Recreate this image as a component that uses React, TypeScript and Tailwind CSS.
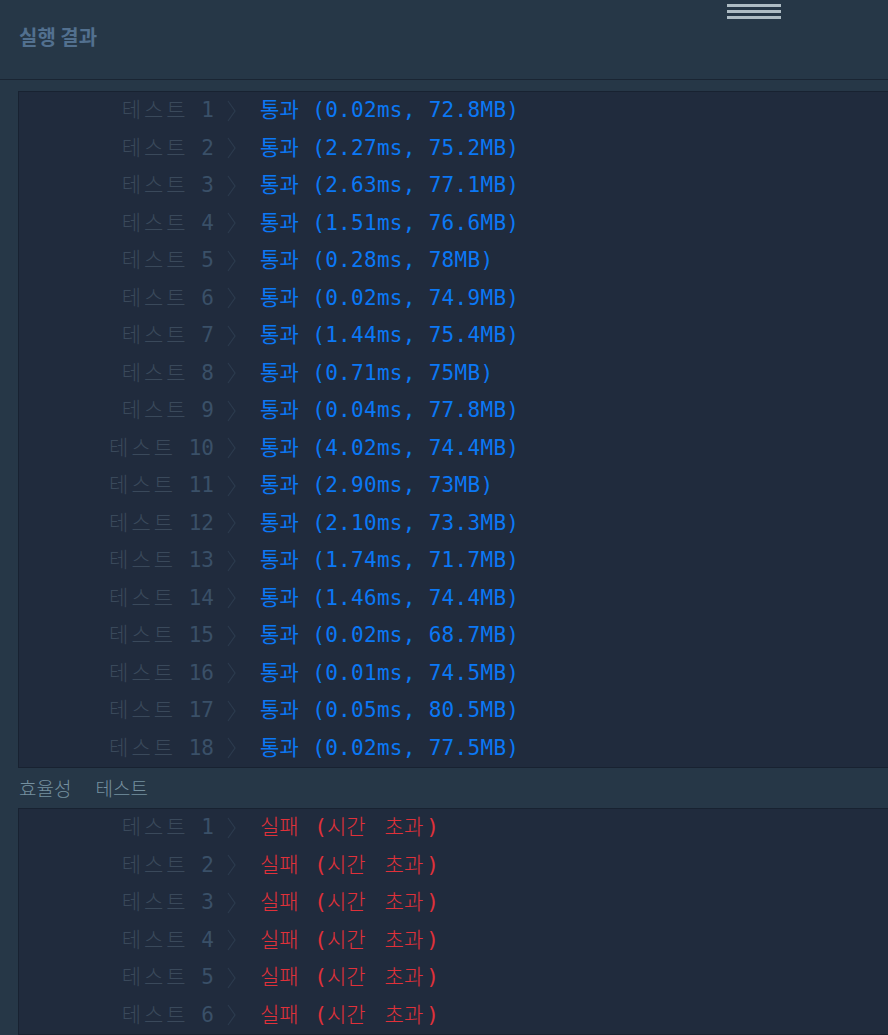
import React from "react";

const pass: [number, string][] = [
  [1, "(0.02ms, 72.8MB)"],
  [2, "(2.27ms, 75.2MB)"],
  [3, "(2.63ms, 77.1MB)"],
  [4, "(1.51ms, 76.6MB)"],
  [5, "(0.28ms, 78MB)"],
  [6, "(0.02ms, 74.9MB)"],
  [7, "(1.44ms, 75.4MB)"],
  [8, "(0.71ms, 75MB)"],
  [9, "(0.04ms, 77.8MB)"],
  [10, "(4.02ms, 74.4MB)"],
  [11, "(2.90ms, 73MB)"],
  [12, "(2.10ms, 73.3MB)"],
  [13, "(1.74ms, 71.7MB)"],
  [14, "(1.46ms, 74.4MB)"],
  [15, "(0.02ms, 68.7MB)"],
  [16, "(0.01ms, 74.5MB)"],
  [17, "(0.05ms, 80.5MB)"],
  [18, "(0.02ms, 77.5MB)"],
];

const mono = "font-['DejaVu_Sans_Mono','Noto_Sans_CJK_KR',monospace]";

function Row({ n, children }: { n: number; children: React.ReactNode }) {
  return (
    <div className={`flex items-center h-[37.5px] text-[21px] leading-none whitespace-pre ${mono}`}>
      <div className="w-[195px] text-right">
        <span className="text-[#3a495b] font-light tracking-[3px]">테스트</span>
        <span className="text-[#3a495b]"> </span>
        <span className="text-[#3a5068]">{n}</span>
      </div>
      <div className="w-[46px] pl-[13px]">
        <svg width="9" height="22" viewBox="0 0 9 22" className="block">
          <path d="M1 1 L8 11 L1 21" fill="none" stroke="#2c3b4e" strokeWidth="1.2" />
        </svg>
      </div>
      <div>{children}</div>
    </div>
  );
}

export default function App() {
  return (
    <div className="w-[888px] h-[1035px] overflow-hidden bg-[#263747] font-['Noto_Sans_CJK_KR','Noto_Sans',sans-serif]">
      <div className="relative h-[80px] border-b border-[#1a2533] flex items-center pl-[19px] pb-[6px]">
        <div className="text-[20px] font-bold text-[#52708f]">실행 결과</div>
        <div className="absolute left-[727px] top-[4px] flex flex-col gap-[3px]">
          <div className="w-[54px] h-[3px] bg-[#aebcc4]" />
          <div className="w-[54px] h-[3px] bg-[#aebcc4]" />
          <div className="w-[54px] h-[3px] bg-[#aebcc4]" />
        </div>
      </div>
      <div className="mt-[11px] ml-[18px] bg-[#202b3d] border-t border-l border-b border-[#182231]">
        {pass.map(([n, r]) => (
          <Row key={n} n={n}>
            <span className="text-[#0b78f5] tracking-[0.3px]">통과 {r}</span>
          </Row>
        ))}
      </div>
      <div className="h-[40px] flex items-center pl-[19px] text-[19px] font-light text-[#75909f] gap-[24px]">
        <span>효율성</span>
        <span>테스트</span>
      </div>
      <div className="ml-[18px] bg-[#202b3d] border-t border-l border-b border-[#182231]">
        {[1, 2, 3, 4, 5, 6].map((n) => (
          <Row key={n} n={n}>
            <span className="text-[#e0313a] font-light">
              실패 <span className="ml-[3px]">(</span>시간<span className="inline-block w-[19px]"> </span>초과<span className="ml-[3px]">)</span>
            </span>
          </Row>
        ))}
      </div>
    </div>
  );
}
